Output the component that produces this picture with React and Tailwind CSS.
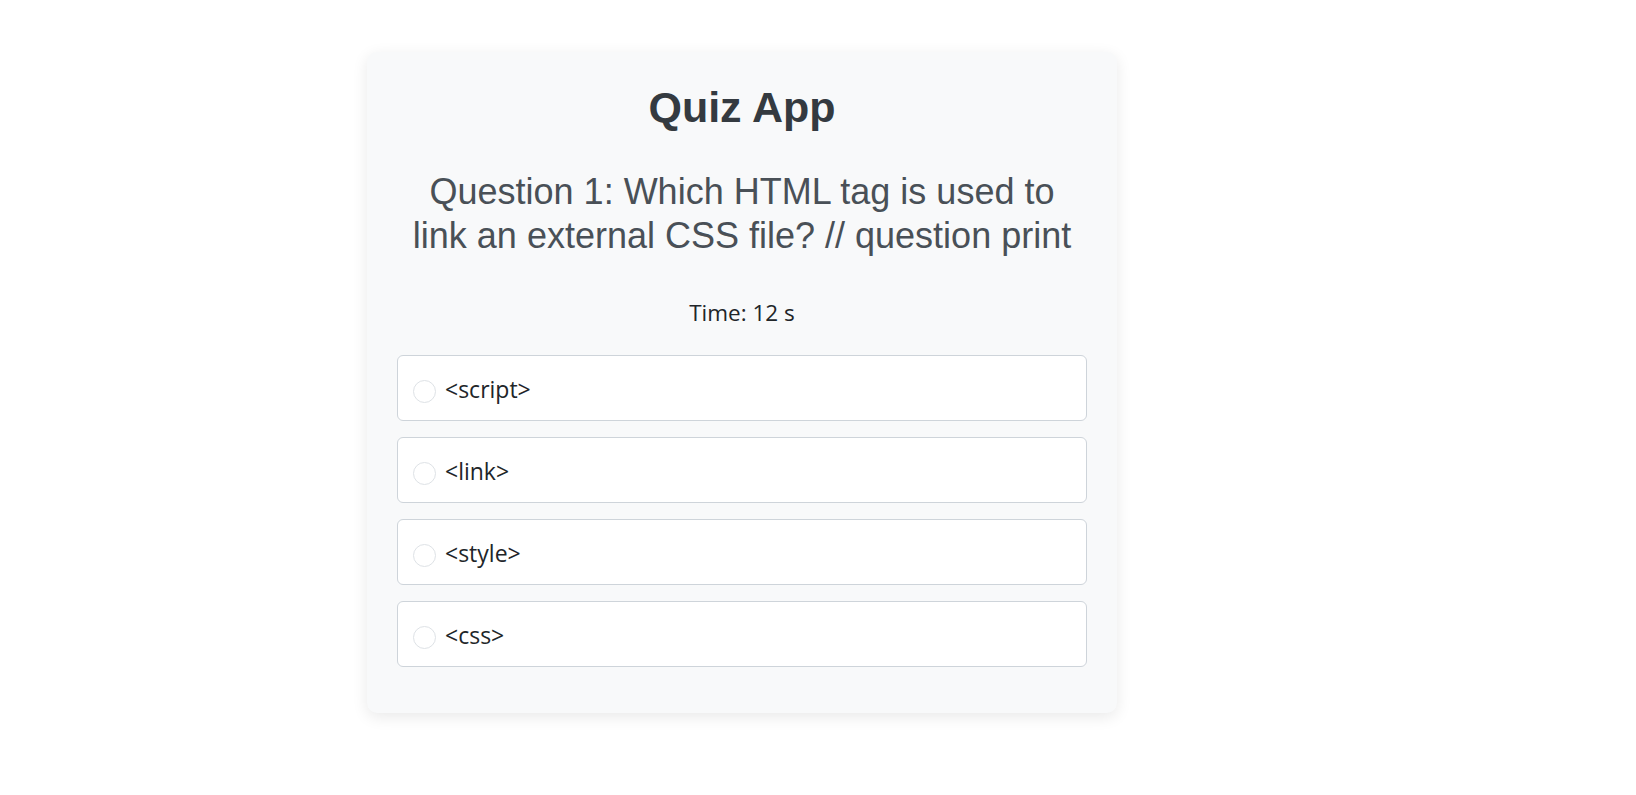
import React, { useState } from 'react';

const question = {
  text: 'Which HTML tag is used to link an external CSS file?',
  options: ['<script>', '<link>', '<style>', '<css>'],
};

function App() {
  const [selected, setSelected] = useState(null);
  const [time] = useState(12);

  return (
    <div className="min-h-screen bg-white pt-[52px] pl-[367px]">
      <div className="w-[750px] bg-[#f8f9fa] rounded-[10px] shadow-[0_4px_16px_rgba(0,0,0,0.09)] pt-[30px] px-[30px] pb-[30px]">
        <h1 className="text-center font-['Liberation_Sans',Arial,sans-serif] font-bold text-[43px] leading-[50px] text-[#343a40]">
          Quiz App
        </h1>

        <h2 className="mt-[38px] px-2 text-center font-['Liberation_Sans',Arial,sans-serif] text-[36px] leading-[44px] text-[#495057]">
          Question 1: {question.text} // question print
        </h2>

        <p className="mt-[40px] text-center font-['Open_Sans',sans-serif] text-[22.5px] leading-[30px] text-[#212529]">
          Time: {time} s
        </p>

        <div className="mt-[27px]">
          {question.options.map((opt, i) => (
            <label
              key={opt}
              onClick={() => setSelected(i)}
              className="flex items-center gap-[9px] h-[66px] pl-[15px] mb-4 bg-white border border-[#ced4da] rounded-md cursor-pointer font-['Open_Sans',sans-serif] text-[23px] leading-[30px] text-[#212529]"
            >
              <span
                className={
                  'mt-1.5 w-[23px] h-[23px] rounded-full border ' +
                  (selected === i ? 'border-[#0d6efd] bg-[#0d6efd]' : 'border-[#dee2e6] bg-white')
                }
              />
              <span className="mt-0.5">{opt}</span>
            </label>
          ))}
        </div>
      </div>
    </div>
  );
}

export default App;
